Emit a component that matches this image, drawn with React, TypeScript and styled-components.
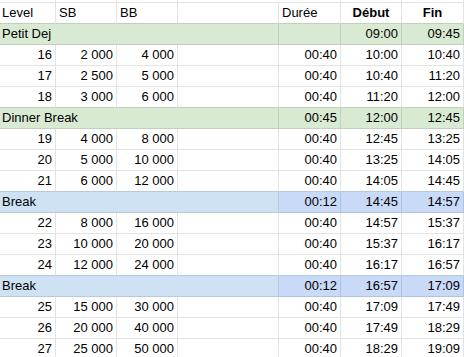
import styled, { createGlobalStyle } from "styled-components";

const GlobalStyle = createGlobalStyle`
  html, body {
    margin: 0;
    padding: 0;
    background: #ffffff;
  }
  body {
    font-family: "Liberation Sans", Arial, sans-serif;
    color: #000000;
  }
`;

type Tint = "none" | "green" | "blue" | "cornflower";

const fills: Record<Tint, string> = {
  none: "#ffffff",
  green: "#d9ead3",
  blue: "#cfe2f3",
  cornflower: "#c9daf8",
};

const lines: Record<Tint, string> = {
  none: "#e2e3e3",
  green: "#c0d0bc",
  blue: "#b8c9d8",
  cornflower: "#b3c2dc",
};

type LevelRow = {
  kind: "level";
  level: number;
  sb: string;
  bb: string;
  dur: string;
  start: string;
  end: string;
};

type PauseRow = {
  kind: "pause";
  name: string;
  tint: "green" | "blue";
  dur: string;
  start: string;
  end: string;
};

type Line = LevelRow | PauseRow;

const lvl = (level: number, sb: string, bb: string, start: string, end: string): LevelRow => ({
  kind: "level", level, sb, bb, dur: "00:40", start, end,
});

const rows: Line[] = [
  { kind: "pause", name: "Petit Dej", tint: "green", dur: "", start: "09:00", end: "09:45" },
  lvl(16, "2 000", "4 000", "10:00", "10:40"),
  lvl(17, "2 500", "5 000", "10:40", "11:20"),
  lvl(18, "3 000", "6 000", "11:20", "12:00"),
  { kind: "pause", name: "Dinner Break", tint: "green", dur: "00:45", start: "12:00", end: "12:45" },
  lvl(19, "4 000", "8 000", "12:45", "13:25"),
  lvl(20, "5 000", "10 000", "13:25", "14:05"),
  lvl(21, "6 000", "12 000", "14:05", "14:45"),
  { kind: "pause", name: "Break", tint: "blue", dur: "00:12", start: "14:45", end: "14:57" },
  lvl(22, "8 000", "16 000", "14:57", "15:37"),
  lvl(23, "10 000", "20 000", "15:37", "16:17"),
  lvl(24, "12 000", "24 000", "16:17", "16:57"),
  { kind: "pause", name: "Break", tint: "blue", dur: "00:12", start: "16:57", end: "17:09" },
  lvl(25, "15 000", "30 000", "17:09", "17:49"),
  lvl(26, "20 000", "40 000", "17:49", "18:29"),
  lvl(27, "25 000", "50 000", "18:29", "19:09"),
];

const Sheet = styled.div`
  width: 464px;
  height: 357px;
  overflow: hidden;
  background: #ffffff;
`;

const Row = styled.div<{ $height?: number }>`
  display: grid;
  grid-template-columns: 56px 61px 61px 101px 62px 61px 1fr;
  height: ${(p) => p.$height ?? 21}px;
`;

const Cell = styled.div<{
  $span?: number;
  $align?: "left" | "right" | "center";
  $tint?: Tint;
  $edge?: Tint;
  $bold?: boolean;
  $first?: boolean;
}>`
  grid-column: span ${(p) => p.$span ?? 1};
  box-sizing: border-box;
  min-width: 0;
  padding: 0 3px 0 ${(p) => (p.$first ? 2 : 3)}px;
  border-right: 1px solid ${(p) => lines[p.$tint ?? "none"]};
  border-bottom: 1px solid ${(p) => lines[p.$edge ?? p.$tint ?? "none"]};
  background: ${(p) => fills[p.$tint ?? "none"]};
  font-size: 13px;
  line-height: 20px;
  font-weight: ${(p) => (p.$bold ? 700 : 400)};
  text-align: ${(p) => p.$align ?? "left"};
  white-space: nowrap;
  overflow: hidden;
`;

const tintOf = (row?: Line): Tint => (row && row.kind === "pause" ? row.tint : "none");

export default function App() {
  return (
    <>
      <GlobalStyle />
      <Sheet>
        <Row $height={3}>
          <Cell />
          <Cell />
          <Cell />
          <Cell $span={2} />
          <Cell />
          <Cell />
        </Row>
        <Row>
          <Cell $first $edge="green">Level</Cell>
          <Cell $edge="green">SB</Cell>
          <Cell $edge="green">BB</Cell>
          <Cell $edge="green" />
          <Cell $edge="green">Durée</Cell>
          <Cell $edge="green" $align="center" $bold>Début</Cell>
          <Cell $edge="green" $align="center" $bold>Fin</Cell>
        </Row>
        {rows.map((row, i) => {
          const next = tintOf(rows[i + 1]);
          if (row.kind === "pause") {
            const side: Tint = row.tint === "blue" ? "cornflower" : "green";
            return (
              <Row key={i}>
                <Cell $span={4} $first $tint={row.tint}>{row.name}</Cell>
                <Cell $align="right" $tint={side}>{row.dur}</Cell>
                <Cell $align="right" $tint={side}>{row.start}</Cell>
                <Cell $align="right" $tint={side}>{row.end}</Cell>
              </Row>
            );
          }
          return (
            <Row key={i}>
              <Cell $align="right" $edge={next}>{row.level}</Cell>
              <Cell $align="right" $edge={next}>{row.sb}</Cell>
              <Cell $align="right" $edge={next}>{row.bb}</Cell>
              <Cell $edge={next} />
              <Cell $align="right" $edge={next}>{row.dur}</Cell>
              <Cell $align="right" $edge={next}>{row.start}</Cell>
              <Cell $align="right" $edge={next}>{row.end}</Cell>
            </Row>
          );
        })}
      </Sheet>
    </>
  );
}
